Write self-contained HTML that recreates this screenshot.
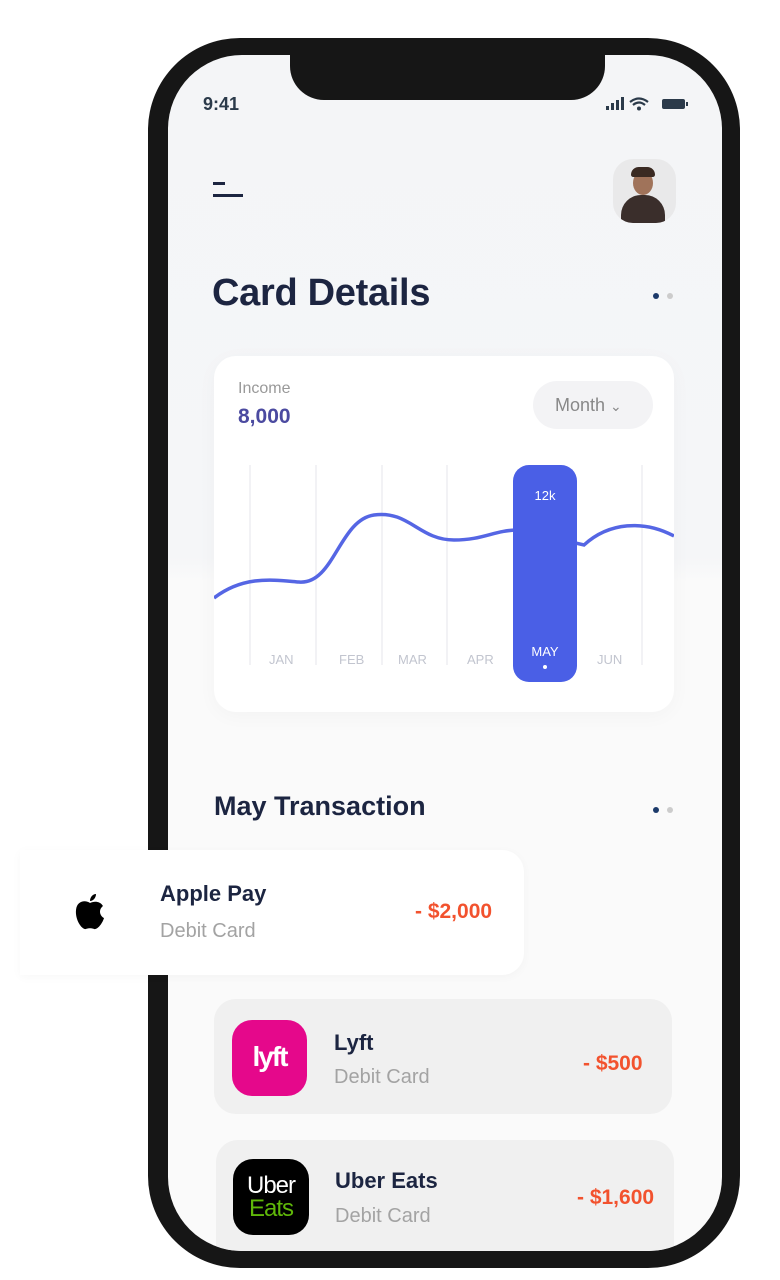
<!DOCTYPE html>
<html><head><meta charset="utf-8"><style>
*{margin:0;padding:0;box-sizing:border-box}
body{width:780px;height:1280px;background:#fff;position:relative;overflow:hidden;font-family:"Liberation Sans",sans-serif}
.abs{position:absolute}
.frame{left:148px;top:38px;width:592px;height:1230px;background:#161616;border-radius:92px}
.screen{left:168px;top:55px;width:554px;height:1196px;background:linear-gradient(#f4f5f7,#f5f6f8 42%,#fafafa 44%,#fafafa);border-radius:74px;overflow:hidden}
.notch{left:290px;top:38px;width:315px;height:62px;background:#161616;border-radius:0 0 34px 34px}
.dark{color:#1c2541}
.card{background:#fff;border-radius:22px}
.month{left:533px;top:381px;width:120px;height:48px;border-radius:24px;background:#f3f3f5;color:#888;font-size:18px;line-height:48px;padding-left:22px}
.lbl{font-size:13px;color:#c2c5cf;top:652px}
.tcard{background:#f0f0f0;border-radius:22px}
.name{font-size:22px;font-weight:bold;color:#1c2541}
.sub{font-size:20px;color:#a3a3a3}
.amt{font-size:21px;font-weight:bold;color:#f2522e}
</style></head><body>
<div class="abs frame"></div>
<div class="abs screen">
<div class="abs tcard" style="left:48px;top:1085px;width:458px;height:140px"></div>
</div>
<div class="abs notch"></div>
<div class="abs dark" style="left:203px;top:94px;font-size:18px;font-weight:bold;color:#2b3a4a">9:41</div>
<svg class="abs" style="left:605px;top:96px" width="84" height="16" viewBox="0 0 84 16">
<rect x="1" y="10" width="3" height="4" fill="#2b3a4a"/><rect x="6" y="7" width="3" height="7" fill="#2b3a4a"/><rect x="11" y="4" width="3" height="10" fill="#2b3a4a"/><rect x="16" y="1" width="3" height="13" fill="#2b3a4a"/>
<path d="M25 6 Q34 -1 43 6 M28 9 Q34 4 40 9" stroke="#2b3a4a" stroke-width="2.2" fill="none"/><circle cx="34" cy="12.5" r="2" fill="#2b3a4a"/>
<rect x="57" y="3" width="23" height="10" rx="2" fill="#2b3a4a"/><rect x="81" y="6" width="2" height="4" fill="#2b3a4a"/></svg>
<div class="abs" style="left:213px;top:182px;width:12px;height:3px;background:#1c2541"></div>
<div class="abs" style="left:213px;top:194px;width:30px;height:3px;background:#1c2541"></div>
<div class="abs" style="left:613px;top:159px;width:63px;height:64px;border-radius:20px;background:#e9e9ea;overflow:hidden">
<div class="abs" style="left:20px;top:12px;width:20px;height:24px;border-radius:50%;background:#a0735a"></div>
<div class="abs" style="left:18px;top:8px;width:24px;height:10px;border-radius:10px 10px 3px 3px;background:#3a2a22"></div>
<div class="abs" style="left:8px;top:36px;width:44px;height:40px;border-radius:20px 20px 0 0;background:#3a2e2b"></div></div>
<div class="abs dark" style="left:212px;top:272px;font-size:38px;font-weight:bold;letter-spacing:-0.3px">Card Details</div>
<div class="abs" style="left:653px;top:293px;width:6px;height:6px;border-radius:3px;background:#1c3a6a"></div>
<div class="abs" style="left:667px;top:293px;width:6px;height:6px;border-radius:3px;background:#ccc"></div>
<div class="abs card" style="left:214px;top:356px;width:460px;height:356px;box-shadow:0 4px 20px rgba(0,0,0,.03)"></div>
<div class="abs" style="left:238px;top:380px;font-size:16px;color:#999">Income</div>
<div class="abs" style="left:238px;top:405px;font-size:21px;font-weight:bold;color:#4b4aa0">8,000</div>
<div class="abs month">Month <span style="font-size:14px">&#8964;</span></div>
<svg class="abs" style="left:214px;top:460px" width="460" height="210" viewBox="0 0 460 210">
<g stroke="#eeeef2" stroke-width="1.5"><line x1="36" y1="5" x2="36" y2="205"/><line x1="102" y1="5" x2="102" y2="205"/><line x1="168" y1="5" x2="168" y2="205"/><line x1="233" y1="5" x2="233" y2="205"/><line x1="428" y1="5" x2="428" y2="205"/></g>
<path d="M0 138 C30 115 60 120 85 122 C120 125 125 60 160 55 C195 50 205 80 240 80 C270 80 280 70 305 70 L370 85 C395 62 430 60 460 76" stroke="#5566e4" stroke-width="3.5" fill="none"/>
</svg>
<div class="abs" style="left:513px;top:465px;width:64px;height:217px;border-radius:16px;background:#4a5fe6"></div>
<div class="abs" style="left:513px;top:488px;width:64px;text-align:center;color:#fff;font-size:13px">12k</div>
<div class="abs" style="left:513px;top:644px;width:64px;text-align:center;color:#fff;font-size:13px">MAY</div>
<div class="abs" style="left:543px;top:665px;width:4px;height:4px;border-radius:2px;background:#fff"></div>
<div class="abs lbl" style="left:269px">JAN</div><div class="abs lbl" style="left:339px">FEB</div><div class="abs lbl" style="left:398px">MAR</div><div class="abs lbl" style="left:467px">APR</div><div class="abs lbl" style="left:597px">JUN</div>
<div class="abs dark" style="left:214px;top:791px;font-size:27px;font-weight:bold">May Transaction</div>
<div class="abs" style="left:653px;top:807px;width:6px;height:6px;border-radius:3px;background:#1c3a6a"></div>
<div class="abs" style="left:667px;top:807px;width:6px;height:6px;border-radius:3px;background:#ccc"></div>
<div class="abs" style="left:20px;top:850px;width:504px;height:125px;background:#fff;border-radius:0 22px 22px 0;box-shadow:0 2px 10px rgba(0,0,0,.03)"></div>
<svg class="abs" style="left:73px;top:893px" width="34" height="38" viewBox="0 0 34 38"><path d="M17 10 C13 7 4 7 3 17 C2 27 9 37 13 36 C15 35 19 35 21 36 C25 37 30 29 31 25 C27 23 25 17 30 13 C27 8 21 8 17 10Z M17 8 C17 4 20 1 23 1 C23 5 20 8 17 8Z" fill="#000"/></svg>
<div class="abs name" style="left:160px;top:881px">Apple Pay</div>
<div class="abs sub" style="left:160px;top:920px">Debit Card</div>
<div class="abs amt" style="left:415px;top:900px">- $2,000</div>
<div class="abs tcard" style="left:214px;top:999px;width:458px;height:115px"></div>
<div class="abs" style="left:232px;top:1020px;width:75px;height:76px;border-radius:20px;background:#e5088b;color:#fff;font-size:28px;font-weight:bold;text-align:center;line-height:74px;letter-spacing:-2px">lyft</div>
<div class="abs name" style="left:334px;top:1030px">Lyft</div>
<div class="abs sub" style="left:334px;top:1066px">Debit Card</div>
<div class="abs amt" style="left:583px;top:1052px">- $500</div>
<div class="abs" style="left:233px;top:1159px;width:76px;height:76px;border-radius:20px;background:#000;text-align:center;font-size:24px;line-height:23px;padding-top:15px;letter-spacing:-1px"><span style="color:#fff">Uber</span><br><span style="color:#5fb709">Eats</span></div>
<div class="abs name" style="left:335px;top:1168px">Uber Eats</div>
<div class="abs sub" style="left:335px;top:1205px">Debit Card</div>
<div class="abs amt" style="left:577px;top:1186px">- $1,600</div>
</body></html>
